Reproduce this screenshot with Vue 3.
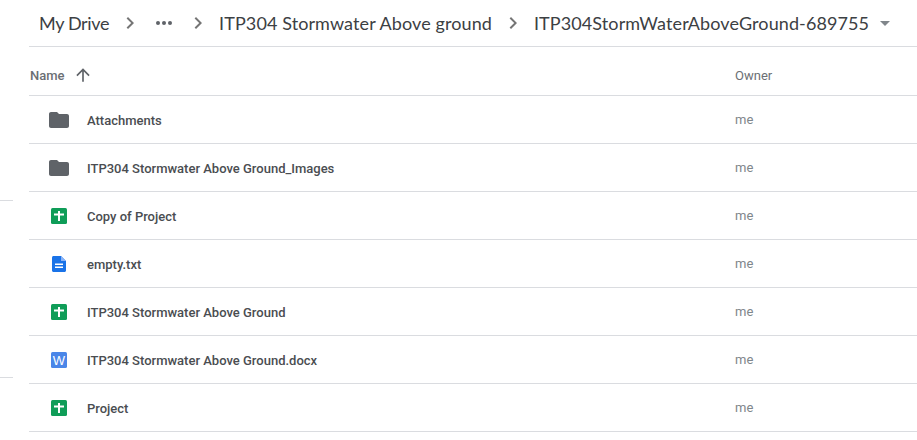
<template>
  <div class="page">
    <aside class="side">
      <div class="side-line first"></div>
      <div class="side-line second"></div>
    </aside>
    <main class="main">
      <nav class="crumbs">
        <span class="crumb root">My Drive</span>
        <svg class="chev" viewBox="0 0 24 24"><path d="M8.6 16.6 13.2 12 8.6 7.4 10 6l6 6-6 6z" /></svg>
        <span class="dots"><i></i><i></i><i></i></span>
        <svg class="chev" viewBox="0 0 24 24"><path d="M8.6 16.6 13.2 12 8.6 7.4 10 6l6 6-6 6z" /></svg>
        <span class="crumb">ITP304 Stormwater Above ground</span>
        <svg class="chev" viewBox="0 0 24 24"><path d="M8.6 16.6 13.2 12 8.6 7.4 10 6l6 6-6 6z" /></svg>
        <span class="crumb">ITP304StormWaterAboveGround-689755</span>
        <span class="caret"></span>
      </nav>
      <div class="head">
        <div class="col-name">
          <span>Name</span>
          <svg class="arrow" viewBox="0 0 24 24"><path d="M4 12l1.41 1.41L11 7.830V20h2V7.830l5.580 5.590L20 12l-8-8z" /></svg>
        </div>
        <div class="col-owner">Owner</div>
      </div>
      <div v-for="file in files" :key="file.name" class="row">
        <div class="icon">
          <svg v-if="file.type === 'folder'" width="24" height="24" viewBox="0 0 24 24">
            <path fill="#5f6368" d="M10 4H4c-1.100 0-2 .9-2 2v12c0 1.100.9 2 2 2h16c1.100 0 2-.9 2-2V8c0-1.100-.9-2-2-2h-8z" />
          </svg>
          <svg v-else-if="file.type === 'sheet'" width="16" height="16" viewBox="0 0 16 16">
            <rect width="16" height="16" rx="1.500" fill="#0f9d58" />
            <path fill="#fff" d="M7 3h2v2.500h4v2H9V13H7V7.500H3v-2h4z" />
          </svg>
          <svg v-else-if="file.type === 'text'" width="14" height="16" viewBox="0 0 14 16">
            <path fill="#1a73e8" d="M1.500 0H9l5 5v9.500c0 .8-.7 1.500-1.500 1.500h-11C.7 16 0 15.300 0 14.500v-13C0 .7.700 0 1.500 0z" />
            <path fill="#8ab4f8" d="M9 0l5 5H9z" />
            <path fill="#fff" d="M3 7.500h8v1.500H3zM3 10.500h8V12H3z" />
          </svg>
          <svg v-else width="16" height="16" viewBox="0 0 16 16">
            <rect width="16" height="16" rx="1.500" fill="#4a86e8" />
            <text x="8" y="13" text-anchor="middle" class="w">W</text>
          </svg>
        </div>
        <div class="name">{{ file.name }}</div>
        <div class="owner">me</div>
      </div>
    </main>
  </div>
</template>

<script setup>
// files in the folder, top to bottom
const files = [
  { name: "Attachments", type: "folder" },
  { name: "ITP304 Stormwater Above Ground_Images", type: "folder" },
  { name: "Copy of Project", type: "sheet" },
  { name: "empty.txt", type: "text" },
  { name: "ITP304 Stormwater Above Ground", type: "sheet" },
  { name: "ITP304 Stormwater Above Ground.docx", type: "word" },
  { name: "Project", type: "sheet" },
];
</script>

<style>
html,
body {
  margin: 0;
  background: #fff;
  overflow: hidden;
}
</style>

<style scoped>
.page {
  display: flex;
  width: 917px;
  height: 440px;
  overflow: hidden;
  font-family: Roboto, "Liberation Sans", sans-serif;
}

.side {
  width: 13px;
  margin-right: 16px;
  flex-shrink: 0;
}

.side-line {
  height: 1px;
  background: #dadce0;
}

.side-line.first {
  margin-top: 200px;
}

.side-line.second {
  margin-top: 176px;
}

.main {
  flex: 1;
  min-width: 0;
}

.crumbs {
  display: flex;
  align-items: center;
  height: 46px;
  padding-left: 10px;
  border-bottom: 1px solid #dadce0;
  white-space: nowrap;
}

.crumb {
  font-family: Lato, sans-serif;
  font-size: 18px;
  letter-spacing: 0.1px;
  color: #3c4043;
}

.crumb.root {
  letter-spacing: -0.35px;
}

.chev {
  width: 24px;
  height: 24px;
  margin: 0 9px;
  fill: #757575;
}

.dots {
  display: flex;
  gap: 2px;
  margin: 0 5px;
}

.dots i {
  width: 4px;
  height: 4px;
  border-radius: 50%;
  background: #5f6368;
}

.caret {
  width: 0;
  height: 0;
  margin-left: 11px;
  border-left: 5px solid transparent;
  border-right: 5px solid transparent;
  border-top: 5px solid #80868b;
}

.head {
  display: flex;
  align-items: center;
  height: 40px;
  padding-top: 8px;
  border-bottom: 1px solid #dadce0;
  font-size: 13px;
  font-weight: 500;
  color: #6b6f74;
}

.col-name {
  display: flex;
  align-items: center;
  width: 706px;
  padding-left: 1px;
  box-sizing: border-box;
}

.arrow {
  width: 20px;
  height: 20px;
  margin-left: 8px;
  fill: #5f6368;
}

.col-owner {
  font-weight: 400;
}

.row {
  display: flex;
  align-items: center;
  height: 47px;
  border-bottom: 1px solid #dadce0;
  font-size: 13px;
}

.icon {
  display: flex;
  align-items: center;
  justify-content: center;
  width: 24px;
  margin-left: 18px;
  margin-right: 16px;
}

.name {
  width: 648px;
  padding-top: 2px;
  font-weight: 500;
  color: #4a4d51;
}

.owner {
  color: #80868b;
}

.w {
  font-family: "Liberation Sans", sans-serif;
  font-size: 13px;
  fill: #fff;
}
</style>
